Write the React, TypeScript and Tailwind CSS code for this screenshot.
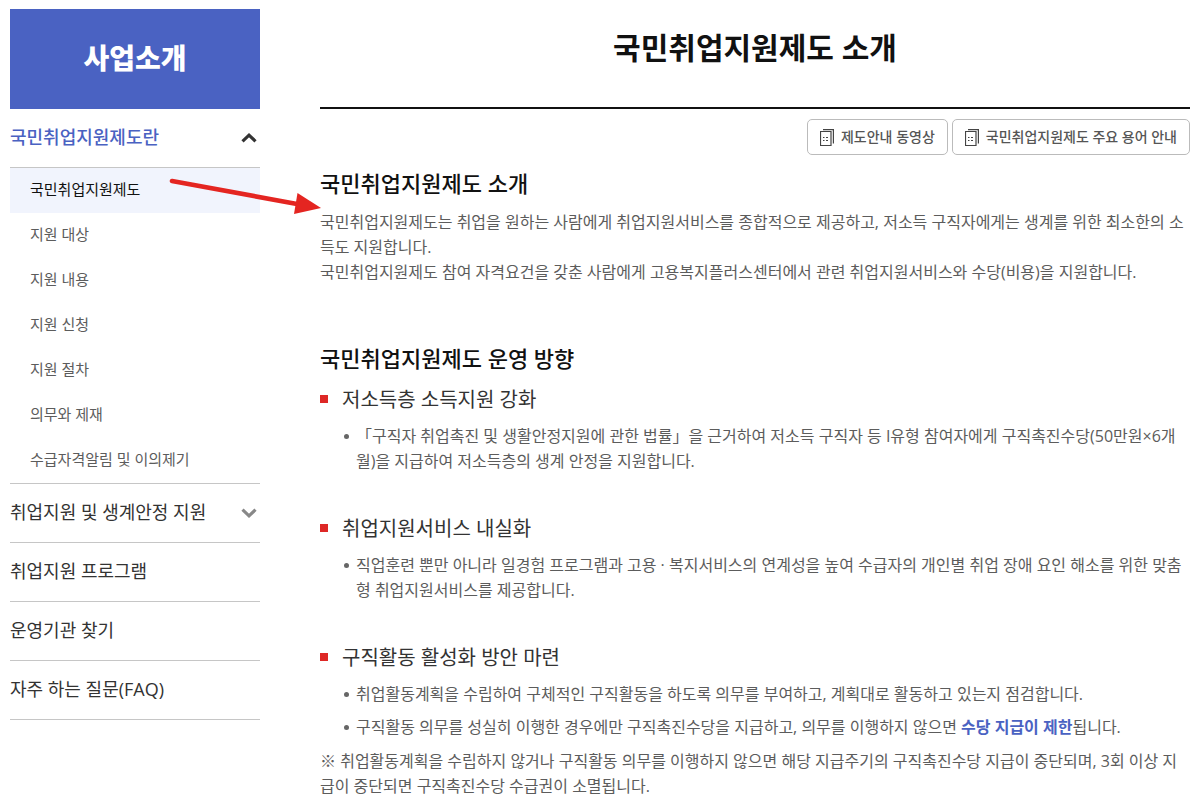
import { useState } from "react";

const subMenu = [
  "국민취업지원제도",
  "지원 대상",
  "지원 내용",
  "지원 신청",
  "지원 절차",
  "의무와 제재",
  "수급자격알림 및 이의제기",
];

const menu = ["취업지원 프로그램", "운영기관 찾기", "자주 하는 질문(FAQ)"];

const directions = [
  {
    title: "저소득층 소득지원 강화",
    items: [
      "「구직자 취업촉진 및 생활안정지원에 관한 법률」을 근거하여 저소득 구직자 등 I유형 참여자에게 구직촉진수당(50만원×6개월)을 지급하여 저소득층의 생계 안정을 지원합니다.",
    ],
  },
  {
    title: "취업지원서비스 내실화",
    items: [
      "직업훈련 뿐만 아니라 일경험 프로그램과 고용 · 복지서비스의 연계성을 높여 수급자의 개인별 취업 장애 요인 해소를 위한 맞춤형 취업지원서비스를 제공합니다.",
    ],
  },
  {
    title: "구직활동 활성화 방안 마련",
    items: [
      "취업활동계획을 수립하여 구체적인 구직활동을 하도록 의무를 부여하고, 계획대로 활동하고 있는지 점검합니다.",
      <>
        구직활동 의무를 성실히 이행한 경우에만 구직촉진수당을 지급하고, 의무를
        이행하지 않으면{" "}
        <strong className="font-bold text-[#4a62c2]">수당 지급이 제한</strong>
        됩니다.
      </>,
    ],
  },
];

const Chevron = ({ className }: { className: string }) => (
  <svg width="16" height="10" viewBox="0 0 16 10" className={className}>
    <path d="M1.5 8.3 8 2.2l6.500 6.1" fill="none" stroke="currentColor" strokeWidth="3.2" />
  </svg>
);

const DocIcon = () => (
  <svg width="14" height="17" viewBox="0 0 14 17" fill="none" stroke="#444">
    <path d="M.5 2.500h10.500v14H.5z" strokeWidth="1.2" />
    <path d="M3 .6h10.400V14.500" strokeWidth="1.2" />
    <path d="M3 8.500h1.500m1.500 0h2M3 11.500h1.500m1.500 0h2" />
  </svg>
);

const LinkButton = ({ label }: { label: string }) => (
  <button className="flex h-9 items-center gap-[7px] rounded-[5px] border border-[#bbb] px-3 text-sm font-medium text-[#555]">
    <DocIcon />
    {label}
  </button>
);

const Sidebar = () => {
  const [open, setOpen] = useState(true);

  return (
    <aside className="w-[250px] shrink-0">
      <h2 className="flex h-[100px] items-center justify-center bg-[#4a62c2] pb-[2px] text-[28px] font-black text-white">
        사업소개
      </h2>
      <nav className="text-lg text-[#333]">
        <button
          onClick={() => setOpen(!open)}
          className="flex h-[59px] w-full items-center justify-between border-b border-[#c6c6c6] pr-[3px] pb-[2px] font-medium text-[#4a62c2]"
        >
          국민취업지원제도란
          <Chevron className="mt-[2px] text-[#333]" />
        </button>
        {open && (
          <ul className="border-b border-[#c6c6c6] text-[15px] text-[#5c5c5c]">
            {subMenu.map((item, i) => (
              <li key={item}>
                <a
                  href="#"
                  className={
                    i === 0
                      ? "flex h-[45px] items-center bg-[#f1f4fd] px-5 pb-[2px] text-[#111]"
                      : "flex h-[45px] items-center px-5 pb-[2px]"
                  }
                >
                  {item}
                </a>
              </li>
            ))}
          </ul>
        )}
        <button className="flex h-[59px] w-full items-center justify-between border-b border-[#c6c6c6] pr-[3px] pb-[2px]">
          취업지원 및 생계안정 지원
          <Chevron className="mt-[2px] rotate-180 text-[#888]" />
        </button>
        {menu.map((item) => (
          <a
            key={item}
            href="#"
            className="flex h-[59px] items-center border-b border-[#c6c6c6] pb-[2px]"
          >
            {item}
          </a>
        ))}
      </nav>
    </aside>
  );
};

const Arrow = () => (
  <svg
    width="160"
    height="50"
    viewBox="0 0 160 50"
    className="pointer-events-none absolute top-[170px] left-[165px]"
  >
    <path d="M7 11 132 34" stroke="#e42521" strokeWidth="4.6" strokeLinecap="round" />
    <path d="M132.500 23 156 38 129 44z" fill="#e42521" />
  </svg>
);

export default function App() {
  return (
    <div className="relative flex gap-[60px] bg-white pt-[9px] pr-[14px] pl-[10px] font-['Open_Sans','Noto_Sans_CJK_KR',sans-serif]">
      <Sidebar />
      <main className="min-w-0 flex-1 text-base leading-[25px] text-[#5c5c5c]">
        <h1 className="flex h-[100px] items-center justify-center border-b-2 border-[#111] pb-5 text-3xl font-bold text-[#111]">
          국민취업지원제도 소개
        </h1>
        <div className="mt-[10px] flex justify-end gap-1">
          <LinkButton label="제도안내 동영상" />
          <LinkButton label="국민취업지원제도 주요 용어 안내" />
        </div>
        <section className="mt-3">
          <h3 className="mb-[11px] text-[22px] leading-8 font-medium text-[#111]">
            국민취업지원제도 소개
          </h3>
          <p>
            국민취업지원제도는 취업을 원하는 사람에게 취업지원서비스를 종합적으로
            제공하고, 저소득 구직자에게는 생계를 위한 최소한의 소득도 지원합니다.
            <br />
            국민취업지원제도 참여 자격요건을 갖춘 사람에게 고용복지플러스센터에서
            관련 취업지원서비스와 수당(비용)을 지원합니다.
          </p>
        </section>
        <section className="mt-[57px]">
          <h3 className="mb-[11px] text-[22px] leading-8 font-medium text-[#111]">
            국민취업지원제도 운영 방향
          </h3>
          <div className="flex flex-col gap-10">
            {directions.map((direction) => (
              <div key={direction.title}>
                <h4 className="flex items-start gap-[14px] text-xl leading-[30px] text-[#333]">
                  <span className="mt-[10px] size-2 bg-[#de2826]"></span>
                  {direction.title}
                </h4>
                <ul className="mt-[9px] flex flex-col gap-2 pl-6">
                  {direction.items.map((item, i) => (
                    <li key={i} className="flex gap-[7px]">
                      <span className="mt-[10px] size-[5px] shrink-0 rounded-full bg-[#666]"></span>
                      <p>{item}</p>
                    </li>
                  ))}
                </ul>
              </div>
            ))}
          </div>
          <p className="mt-[9px]">
            ※ 취업활동계획을 수립하지 않거나 구직활동 의무를 이행하지 않으면 해당
            지급주기의 구직촉진수당 지급이 중단되며, 3회 이상 지급이 중단되면
            구직촉진수당 수급권이 소멸됩니다.
          </p>
        </section>
      </main>
      <Arrow />
    </div>
  );
}
